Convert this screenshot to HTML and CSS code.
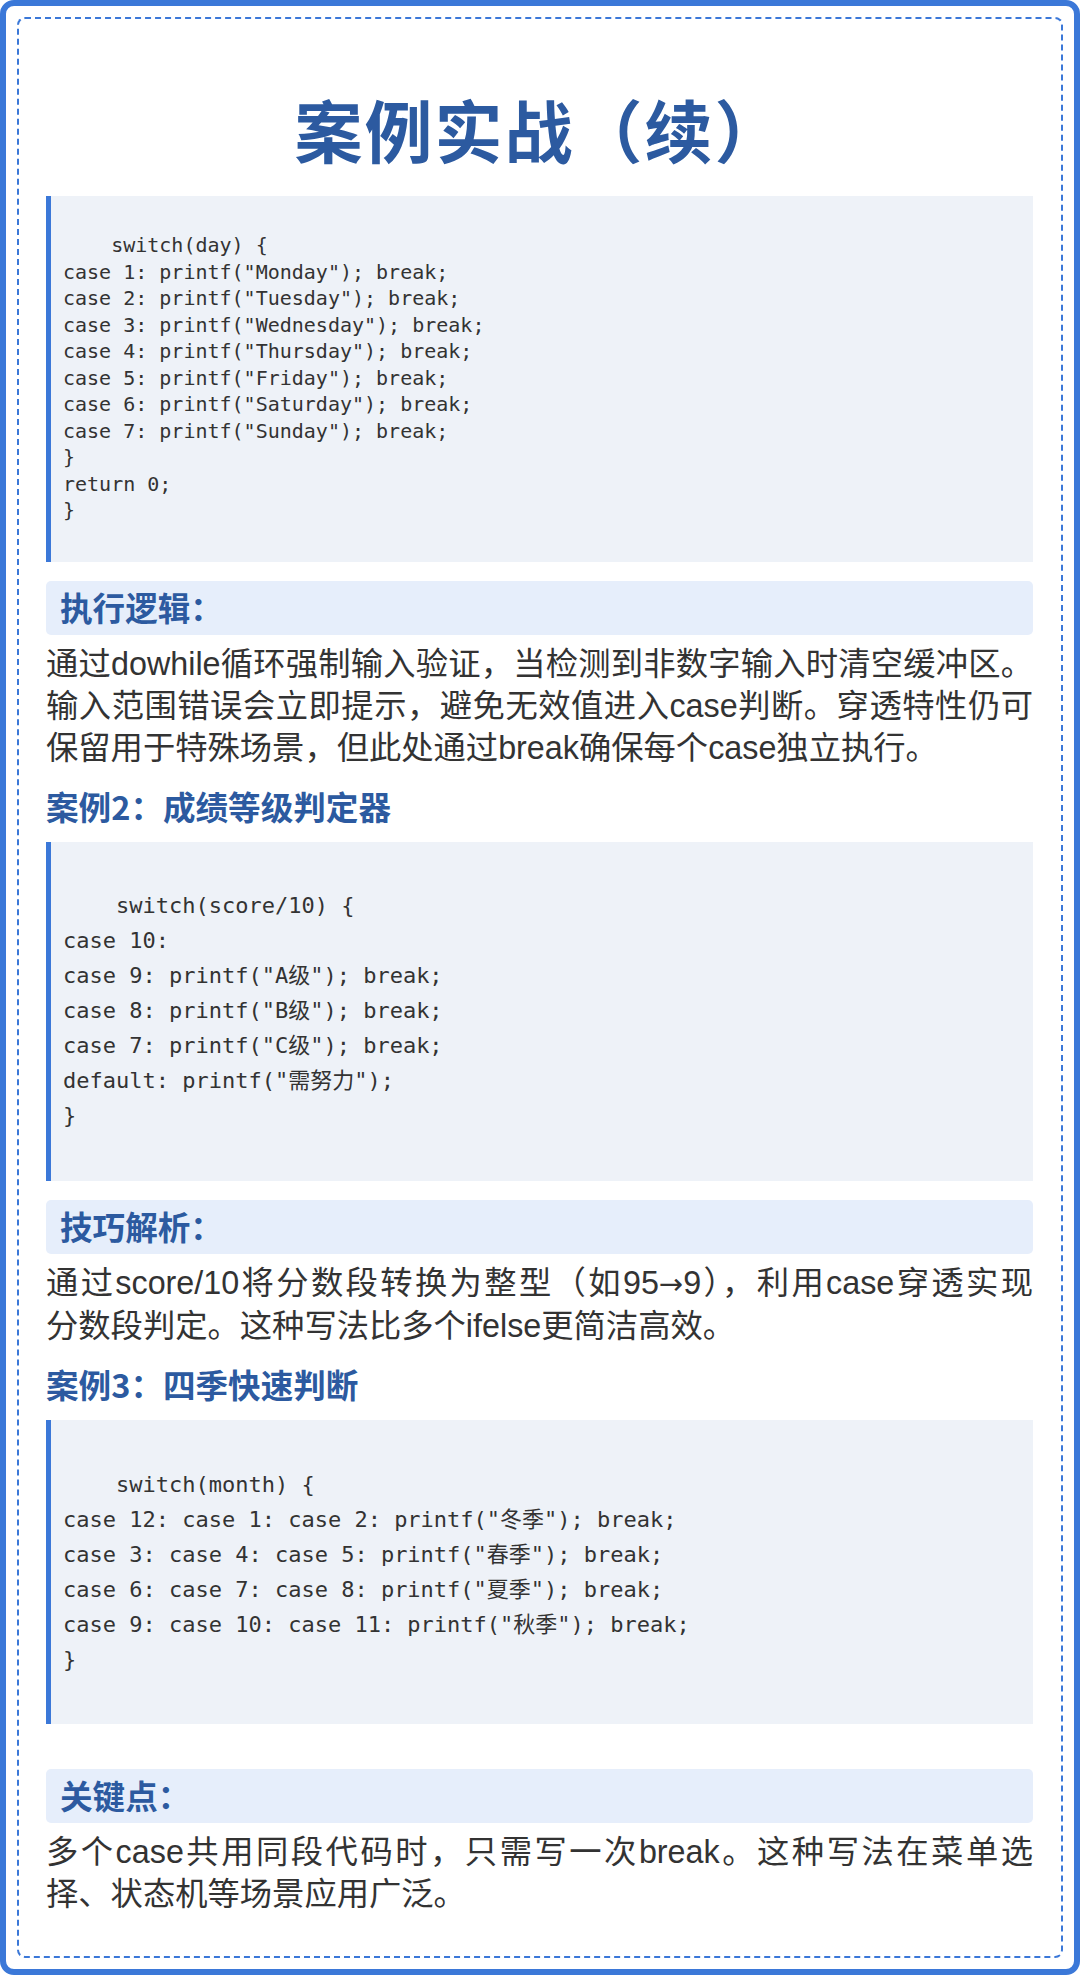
FILE: index.html
```html
<!DOCTYPE html>
<html lang="zh-CN">
<head>
<meta charset="utf-8">
<title>案例实战（续）</title>
<link rel="stylesheet" href="styles.css">
</head>
<body>
<div class="page">
  <div class="frame">
    <h1 class="title">案例实战（续）</h1>

    <pre class="code code-compact">    switch(day) {
case 1: printf("Monday"); break;
case 2: printf("Tuesday"); break;
case 3: printf("Wednesday"); break;
case 4: printf("Thursday"); break;
case 5: printf("Friday"); break;
case 6: printf("Saturday"); break;
case 7: printf("Sunday"); break;
}
return 0;
}</pre>

    <div class="label">执行逻辑：</div>
    <p class="para">
      <span class="ln">通过dowhile循环强制输入验证，当检测到非数字输入时清空缓冲区。</span>
      <span class="ln">输入范围错误会立即提示，避免无效值进入case判断。穿透特性仍可</span>
      <span class="ln last">保留用于特殊场景，但此处通过break确保每个case独立执行。</span>
    </p>

    <h2 class="case-title">案例2：成绩等级判定器</h2>
    <pre class="code code-wide code-b2">    switch(score/10) {
case 10:
case 9: printf("A级"); break;
case 8: printf("B级"); break;
case 7: printf("C级"); break;
default: printf("需努力");
}</pre>

    <div class="label">技巧解析：</div>
    <p class="para">
      <span class="ln">通过score/10将分数段转换为整型（如95<span class="arrow">→</span>9），利用case穿透实现</span>
      <span class="ln last">分数段判定。这种写法比多个ifelse更简洁高效。</span>
    </p>

    <h2 class="case-title">案例3：四季快速判断</h2>
    <pre class="code code-wide code-b3">    switch(month) {
case 12: case 1: case 2: printf("冬季"); break;
case 3: case 4: case 5: printf("春季"); break;
case 6: case 7: case 8: printf("夏季"); break;
case 9: case 10: case 11: printf("秋季"); break;
}</pre>

    <div class="label label-spaced">关键点：</div>
    <p class="para">
      <span class="ln">多个case共用同段代码时，只需写一次break。这种写法在菜单选</span>
      <span class="ln last">择、状态机等场景应用广泛。</span>
    </p>
  </div>
</div>
</body>
</html>
```

FILE: styles.css
```css
* {
  box-sizing: border-box;
}

html, body {
  margin: 0;
  padding: 0;
  background: #ffffff;
}

body {
  font-family: "Liberation Sans", "Noto Sans CJK SC", sans-serif;
  color: #333333;
}

.page {
  width: 1080px;
  height: 1975px;
  border: 6px solid #3b78d8;
  border-radius: 14px;
  padding: 11px;
  background: #ffffff;
}

.frame {
  height: 100%;
  border: 2px dashed #3b78d8;
  border-radius: 8px;
  padding: 62px 28px 0 27px;
}

.title {
  margin: 0;
  text-align: center;
  font-family: "Noto Sans CJK SC", sans-serif;
  font-size: 68px;
  font-weight: 700;
  line-height: 95px;
  letter-spacing: 2px;
  color: #2c5aa0;
}

.code {
  margin: 0;
  background: #eef2f8;
  border-left: 5px solid #3b78d8;
  font-family: "DejaVu Sans Mono", "Noto Sans CJK SC", monospace;
  color: #333333;
  white-space: pre;
}

.code-compact {
  margin-top: 20px;
  font-size: 20px;
  line-height: 26.5px;
  padding: 36px 12px 38px 12px;
}

.code-wide {
  margin-top: 15px;
  font-size: 22px;
  line-height: 35px;
  padding-left: 12px;
  padding-right: 12px;
}

.code-b2 {
  padding-top: 46px;
  padding-bottom: 48px;
}

.code-b3 {
  padding-top: 47px;
  padding-bottom: 47px;
}

.label {
  margin-top: 19px;
  background: #e6eefb;
  border-radius: 5px;
  padding: 5px 14px 7px 14px;
  font-family: "Noto Sans CJK SC", sans-serif;
  font-size: 32.6px;
  font-weight: 700;
  line-height: 42px;
  color: #2c5aa0;
}

.label-spaced {
  margin-top: 45px;
}

.para {
  margin: 8px 0 0 0;
  font-size: 32.3px;
  line-height: 42px;
  color: #333333;
}

.ln {
  display: block;
  text-align: justify;
  text-align-last: justify;
}

.ln.last {
  text-align-last: left;
}

.arrow {
  font-family: "DejaVu Sans", sans-serif;
  font-size: 0.9em;
}

.case-title {
  margin: 16px 0 0 0;
  font-family: "Noto Sans CJK SC", sans-serif;
  font-size: 32.6px;
  font-weight: 700;
  line-height: 42px;
  color: #2c5aa0;
}
```
